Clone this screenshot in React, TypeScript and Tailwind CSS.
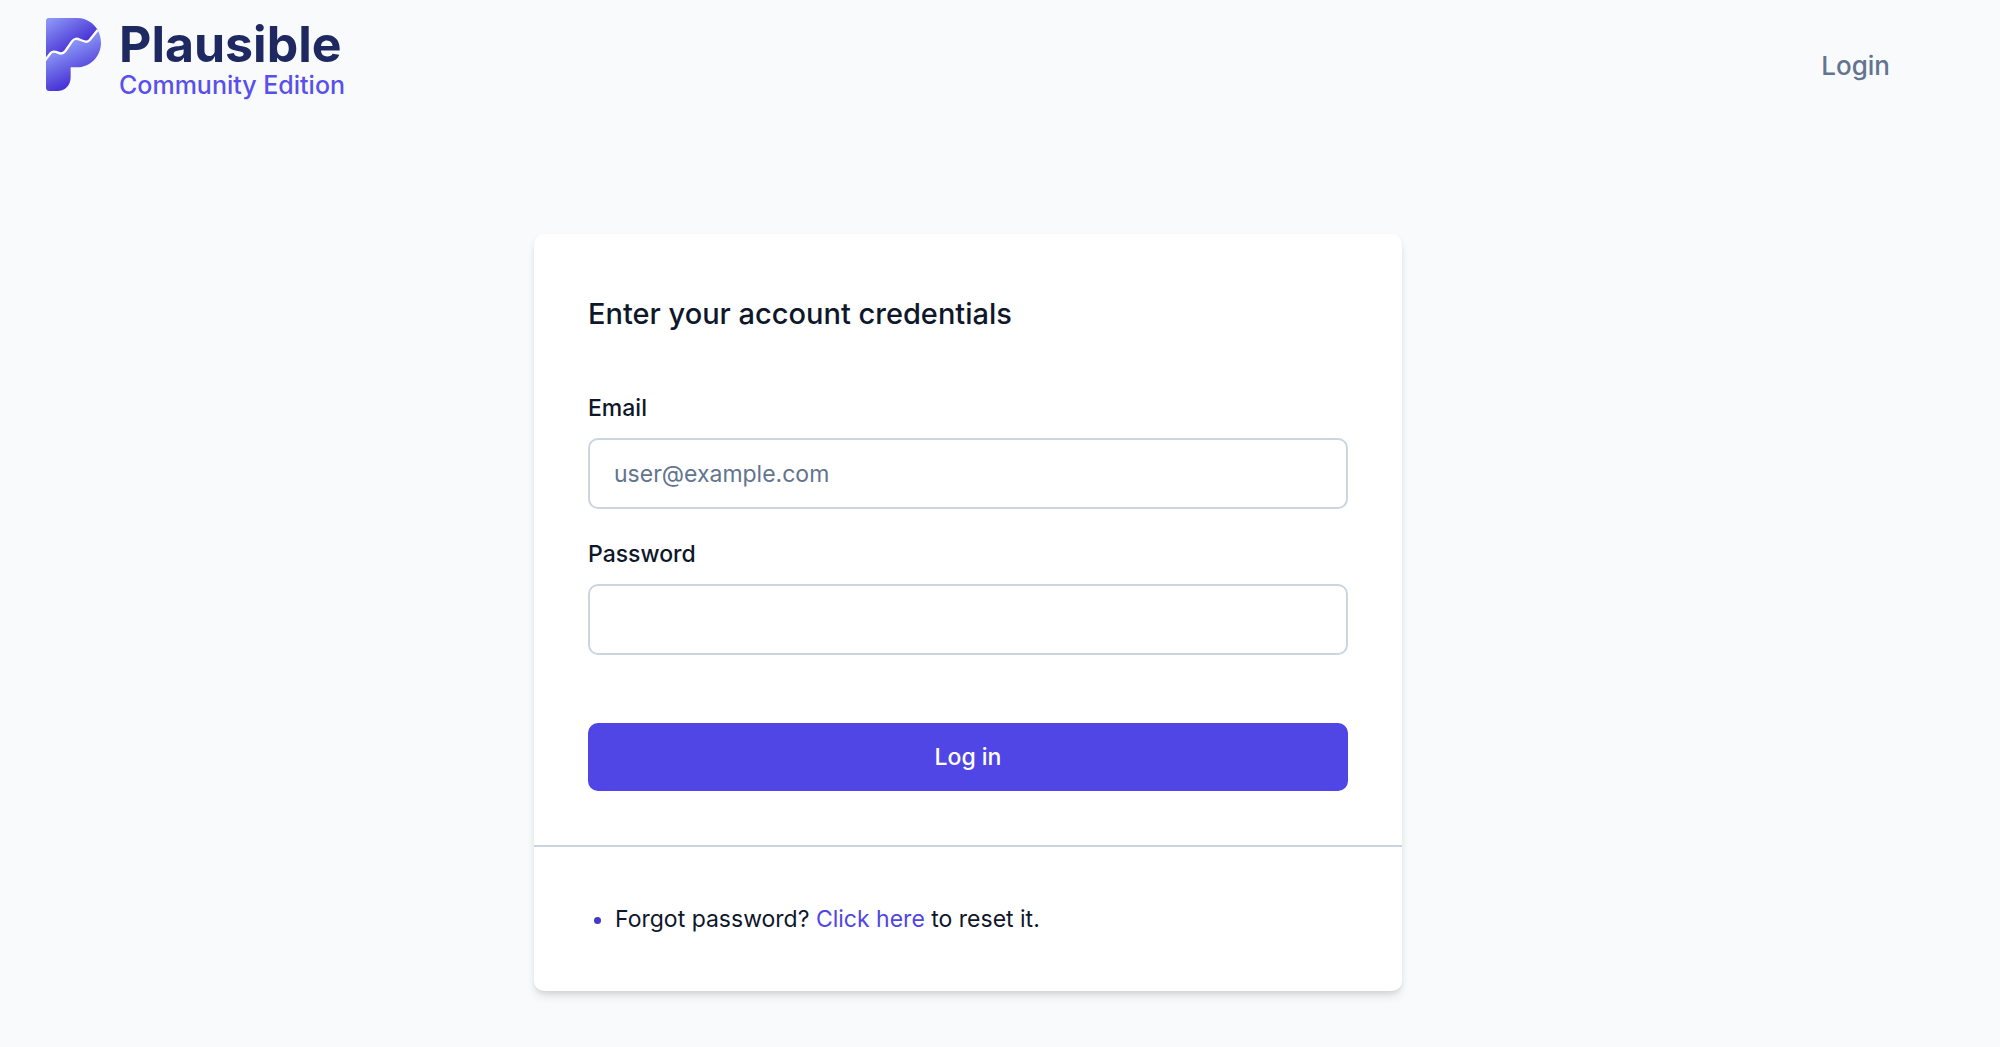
const P_SHAPE =
  'M10 0H91C133 0 165 33 165 74C165 115 133 148 91 148H74V177C74 202 58 219 34 219H10C4 219 0 215 0 209V10C0 4 4 0 10 0Z';
const TREND =
  'M-6 131L14 105C20 98 27 100 36 104C46 109 52 107 58 99L78 70C85 60 92 61 104 66C119 72 124 74 131 66L158 32';

function LogoMark() {
  return (
    <svg viewBox="0 0 165 219" className="h-[73px] w-[55px] shrink-0" aria-hidden="true">
      <defs>
        <linearGradient id="upper" x1="20" y1="0" x2="78" y2="92" gradientUnits="userSpaceOnUse">
          <stop offset="0" stopColor="#8b94f5" />
          <stop offset="1" stopColor="#4a36d6" />
        </linearGradient>
        <linearGradient id="lower" x1="45" y1="95" x2="88" y2="190" gradientUnits="userSpaceOnUse">
          <stop offset="0" stopColor="#8791f4" />
          <stop offset="1" stopColor="#4a36d6" />
        </linearGradient>
        <clipPath id="mark">
          <path d={P_SHAPE} />
        </clipPath>
      </defs>
      <g clipPath="url(#mark)">
        <path d="M0 0H165V219H0Z" fill="url(#lower)" />
        <path d={`${TREND}V-6H-6Z`} fill="url(#upper)" />
        <path d={TREND} fill="none" stroke="#ffffff" strokeWidth="7" strokeLinejoin="round" />
      </g>
    </svg>
  );
}

function Field({ id, label, type, placeholder }: { id: string; label: string; type: string; placeholder?: string }) {
  return (
    <div className="flex flex-col gap-3">
      <label htmlFor={id} className="text-[23px] leading-9 font-medium">
        {label}
      </label>
      <input
        id={id}
        type={type}
        placeholder={placeholder}
        className="h-[71px] w-full rounded-[10px] border-2 border-slate-300 bg-white px-6 text-[23px] placeholder:text-slate-500"
      />
    </div>
  );
}

export default function App() {
  return (
    <div className="min-h-screen bg-slate-50 pr-16 font-['Inter',sans-serif] text-slate-900">
      <header className="flex items-start justify-between px-[46px] pt-[18px]">
        <a href="#" className="flex items-start gap-[18px]">
          <LogoMark />
          <span className="flex flex-col">
            <span className="text-[50px] leading-[53px] font-bold text-[#1f2961]">Plausible</span>
            <span className="text-[25px] leading-7 font-medium text-[#5850ec]">Community Edition</span>
          </span>
        </a>
        <a href="#" className="mt-7 text-[26px] leading-10 font-medium text-slate-500">
          Login
        </a>
      </header>
      <main className="mx-auto mt-[135px] w-full max-w-[868px] rounded-[10px] bg-white shadow-[0_6px_10px_-1px_rgba(0,0,0,0.1),0_3px_6px_-2px_rgba(0,0,0,0.1)]">
        <form className="px-[54px] pt-[60px] pb-[54px]" onSubmit={(e) => e.preventDefault()}>
          <h1 className="mb-14 text-[29px] leading-10 font-medium">Enter your account credentials</h1>
          <div className="flex flex-col gap-[27px]">
            <Field id="email" label="Email" type="email" placeholder="user@example.com" />
            <Field id="password" label="Password" type="password" />
          </div>
          <button
            type="submit"
            className="mt-[68px] h-[68px] w-full rounded-[10px] bg-[#4f46e5] text-[23px] font-medium text-white"
          >
            Log in
          </button>
        </form>
        <div className="border-t-2 border-slate-300 px-[54px] py-[54px]">
          <ul className="list-disc pl-[27px] text-[23px] leading-9 marker:text-[#4338ca]">
            <li>
              Forgot password?{' '}
              <a href="#" className="text-[#4f46e5]">
                Click here
              </a>{' '}
              to reset it.
            </li>
          </ul>
        </div>
      </main>
    </div>
  );
}
